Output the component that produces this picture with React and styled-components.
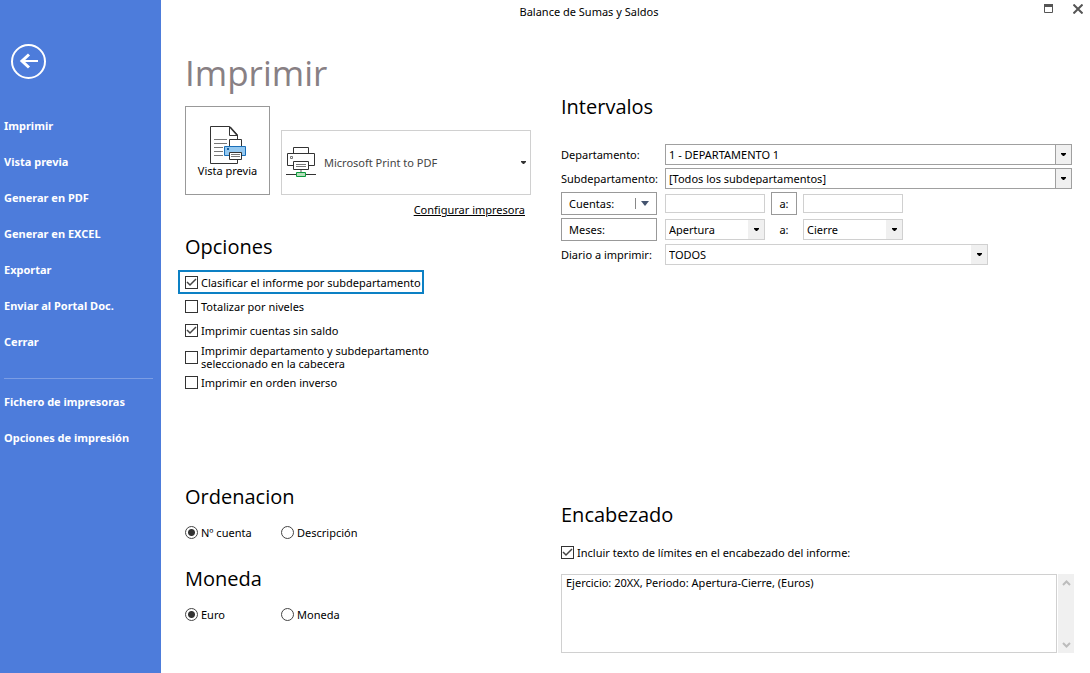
import React, { useState } from 'react';
import styled, { createGlobalStyle } from 'styled-components';

const menuItems = [
  'Imprimir',
  'Vista previa',
  'Generar en PDF',
  'Generar en EXCEL',
  'Exportar',
  'Enviar al Portal Doc.',
  'Cerrar',
];

const configItems = ['Fichero de impresoras', 'Opciones de impresión'];

const printOptions = [
  { id: 'clasificar', label: 'Clasificar el informe por subdepartamento', checked: true, active: true },
  { id: 'totalizar', label: 'Totalizar por niveles', checked: false },
  { id: 'sinsaldo', label: 'Imprimir cuentas sin saldo', checked: true },
  {
    id: 'cabecera',
    label: 'Imprimir departamento y subdepartamento seleccionado en la cabecera',
    checked: false,
  },
  { id: 'inverso', label: 'Imprimir en orden inverso', checked: false },
];

function BackIcon() {
  return (
    <svg width="35" height="35" viewBox="0 0 35 35" fill="none" stroke="#fff">
      <circle cx="17.5" cy="17.5" r="16.5" strokeWidth="2" />
      <path d="M27 17H10.5" strokeWidth="2" />
      <path d="M18 10.5L11 17L18 23.5" strokeWidth="3" />
    </svg>
  );
}

function PreviewIcon() {
  return (
    <svg width="36" height="38" viewBox="1 0 36 38" fill="none">
      <path d="M1.5 0.5H20.5L28.5 9V37.5H1.5Z" fill="#fff" stroke="#333" />
      <path d="M20.5 0.5V9.5H28.5" stroke="#333" />
      <path d="M21 1L28 9" stroke="#333" strokeWidth="1.6" />
      <path d="M5 13.5H18M5 17.5H18M5 21.5H14M5 25.5H14M5 29.5H14" stroke="#777" />
      <path d="M20.5 20.5V13.5H32.5V20.5" fill="#fff" stroke="#333" />
      <path d="M15.5 20.5H36.5V29.5H15.5Z" fill="#94c8f0" stroke="#1a6fb8" />
      <path d="M18 22H20V24H18Z" fill="#1a5f9e" />
      <path d="M20.5 26.5H32.5V33.5H20.5Z" fill="#fff" stroke="#333" />
      <path d="M22 28.5H31M22 30.5H31" stroke="#777" />
    </svg>
  );
}

function PrinterIcon() {
  return (
    <svg width="30" height="31" viewBox="0 0 30 31" fill="none">
      <path d="M7.5 6.5V0.5H22.5V6.5" fill="#fff" stroke="#333" />
      <path d="M1.5 6.5H28.5V18.5H1.5Z" fill="#fff" stroke="#333" />
      <path d="M4.5 9.5H6.5V11.5H4.5Z" stroke="#777" />
      <path d="M7.5 14.5H22.5V22.5H7.5Z" fill="#fff" stroke="#333" />
      <path d="M10 17.5H20M10 19.5H20" stroke="#777" />
      <path d="M15 23V26" stroke="#aaa" strokeWidth="2" />
      <path d="M0 27.5H30" stroke="#333" />
      <path d="M10.5 25.5H19.5V29.5H10.5Z" fill="#b5dfba" stroke="#0c9a3c" />
    </svg>
  );
}

function Caret({ color = '#000' }) {
  return (
    <svg width="5" height="3" viewBox="0 0 5 3">
      <path d="M0 0H5V1L3 3H2L0 1Z" fill={color} />
    </svg>
  );
}

function Chevron({ down }) {
  return (
    <svg width="9" height="8" viewBox="0 0 9 8" fill="none" stroke="#bcbcbc" strokeWidth="2">
      <path d={down ? 'M1 2L4.5 5.5L8 2' : 'M1 6L4.5 2.5L8 6'} />
    </svg>
  );
}

function Check({ label, checked, onChange }) {
  return (
    <CheckLabel>
      <BoxHolder>
        <Box type="checkbox" checked={checked} onChange={onChange} />
        {checked && (
          <svg width="13" height="13" viewBox="0 0 13 13" fill="none" stroke="#444" strokeWidth="1.5">
            <path d="M2 6L5 9L11 3" />
          </svg>
        )}
      </BoxHolder>
      <span>{label}</span>
    </CheckLabel>
  );
}

function Radios({ name, items }) {
  const [value, setValue] = useState(items[0]);
  return (
    <RadioRow>
      {items.map((item) => (
        <CheckLabel key={item}>
          <Radio
            type="radio"
            name={name}
            checked={value === item}
            onChange={() => setValue(item)}
          />
          <span>{item}</span>
        </CheckLabel>
      ))}
    </RadioRow>
  );
}

function Combo({ id, label, value, width, strong }) {
  return (
    <ComboBox $width={width} $strong={strong}>
      <select id={id} aria-label={label} defaultValue={value}>
        <option>{value}</option>
      </select>
      <ComboArrow $strong={strong}>
        <Caret />
      </ComboArrow>
    </ComboBox>
  );
}

function App() {
  const [options, setOptions] = useState(printOptions);
  const [header, setHeader] = useState(true);

  const toggle = (id) =>
    setOptions(options.map((o) => (o.id === id ? { ...o, checked: !o.checked } : o)));

  return (
    <Page>
      <GlobalStyle />
      <Sidebar>
        <BackButton aria-label="Volver">
          <BackIcon />
        </BackButton>
        <Menu>
          {menuItems.map((item) => (
            <MenuLink href="#" key={item}>
              {item}
            </MenuLink>
          ))}
        </Menu>
        <Divider />
        <Menu>
          {configItems.map((item) => (
            <MenuLink href="#" key={item}>
              {item}
            </MenuLink>
          ))}
        </Menu>
      </Sidebar>

      <Main>
        <TitleBar>
          <WindowTitle>Balance de Sumas y Saldos</WindowTitle>
          <WindowButtons>
            <button aria-label="Maximizar">
              <svg width="9" height="9" viewBox="0 0 9 9">
                <path d="M0.5 0.5H8.5V8.5H0.5Z" fill="#fff" stroke="#555" />
                <path d="M0 0H9V3H0Z" fill="#555" />
              </svg>
            </button>
            <button aria-label="Cerrar">
              <svg width="10" height="10" viewBox="0 0 10 10" stroke="#555" strokeWidth="2">
                <path d="M0.5 0.5L9.5 9.5M9.5 0.5L0.5 9.5" />
              </svg>
            </button>
          </WindowButtons>
        </TitleBar>

        <Columns>
          <Left>
            <PageTitle>Imprimir</PageTitle>
            <PrinterRow>
              <PreviewButton>
                <PreviewIcon />
                Vista previa
              </PreviewButton>
              <PrinterButton>
                <PrinterIcon />
                <span>Microsoft Print to PDF</span>
                <Caret color="#333" />
              </PrinterButton>
            </PrinterRow>
            <ConfigLink href="#">Configurar impresora</ConfigLink>

            <Heading>Opciones</Heading>
            <OptionList>
              {options.map((o) => (
                <Option key={o.id} $active={o.active}>
                  <Check label={o.label} checked={o.checked} onChange={() => toggle(o.id)} />
                </Option>
              ))}
            </OptionList>

            <Heading>Ordenacion</Heading>
            <Radios name="orden" items={['Nº cuenta', 'Descripción']} />
            <Heading>Moneda</Heading>
            <Radios name="moneda" items={['Euro', 'Moneda']} />
          </Left>

          <Right>
            <Heading>Intervalos</Heading>
            <Fields>
              <Field>
                <label htmlFor="departamento">Departamento:</label>
                <Combo id="departamento" value="1 - DEPARTAMENTO 1" strong />
              </Field>
              <Field>
                <label htmlFor="subdepartamento">Subdepartamento:</label>
                <Combo id="subdepartamento" value="[Todos los subdepartamentos]" strong />
              </Field>
              <Field>
                <FieldButton>
                  Cuentas:
                  <SplitArrow>
                    <svg width="8" height="5" viewBox="0 0 8 5">
                      <path d="M0 0H8L4 5Z" fill="#44546f" />
                    </svg>
                  </SplitArrow>
                </FieldButton>
                <Range>
                  <TextInput aria-label="Cuenta inicial" />
                  <ToButton>a:</ToButton>
                  <TextInput aria-label="Cuenta final" />
                </Range>
              </Field>
              <Field>
                <FieldButton>Meses:</FieldButton>
                <Range>
                  <Combo label="Mes inicial" value="Apertura" width="100px" />
                  <ToLabel>a:</ToLabel>
                  <Combo label="Mes final" value="Cierre" width="100px" />
                </Range>
              </Field>
              <Field>
                <label htmlFor="diario">Diario a imprimir:</label>
                <Combo id="diario" value="TODOS" width="323px" />
              </Field>
            </Fields>

            <Heading>Encabezado</Heading>
            <HeaderOption>
              <Check
                label="Incluir texto de límites en el encabezado del informe:"
                checked={header}
                onChange={() => setHeader(!header)}
              />
            </HeaderOption>
            <HeaderText>
              <textarea
                aria-label="Texto del encabezado"
                defaultValue="Ejercicio: 20XX, Periodo: Apertura-Cierre, (Euros)"
              />
              <ScrollBar>
                <button aria-label="Subir">
                  <Chevron />
                </button>
                <button aria-label="Bajar">
                  <Chevron down />
                </button>
              </ScrollBar>
            </HeaderText>
          </Right>
        </Columns>
      </Main>
    </Page>
  );
}

export default App;

const GlobalStyle = createGlobalStyle`
  * {
    box-sizing: border-box;
  }

  body {
    margin: 0;
    background: #fff;
    color: #000;
    font-family: 'Noto Sans', 'Open Sans', sans-serif;
    font-size: 11px;
    line-height: 13px;
  }

  button, input, select, textarea {
    margin: 0;
    padding: 0;
    border: none;
    border-radius: 0;
    background: transparent;
    color: inherit;
    font: inherit;
  }

  svg {
    display: block;
    flex-shrink: 0;
  }
`;

const Page = styled.div`
  display: flex;
  min-height: 100vh;
`;

const Sidebar = styled.aside`
  width: 161px;
  flex-shrink: 0;
  padding: 44px 8px 0 4px;
  background: #4d7cdb;
`;

const BackButton = styled.button`
  display: block;
  margin: 0 0 29px 7px;
`;

const Menu = styled.nav`
  display: flex;
  flex-direction: column;
`;

const MenuLink = styled.a`
  color: #fff;
  font-weight: 700;
  line-height: 36px;
  text-decoration: none;
  white-space: nowrap;
`;

const Divider = styled.hr`
  height: 1px;
  margin: 18px 0 5px;
  border: none;
  background: #7b9de4;
`;

const Main = styled.main`
  flex: 1;
  min-width: 0;
`;

const TitleBar = styled.header`
  display: flex;
  height: 24px;
`;

const WindowTitle = styled.div`
  flex: 1;
  text-align: center;
  line-height: 24px;
`;

const WindowButtons = styled.div`
  display: flex;
  gap: 20px;
  width: 73px;
  padding: 4px 0 0 27px;

  button {
    align-self: flex-start;
  }
`;

const Columns = styled.div`
  display: grid;
  grid-template-columns: 346px minmax(0, 1fr);
  column-gap: 30px;
  padding: 0 16px 20px 24px;
`;

const Left = styled.section`
  display: flex;
  flex-direction: column;
`;

const Right = styled.section`
  padding-top: 69px;
`;

const PageTitle = styled.h1`
  margin: 24px 0 8px;
  color: #888084;
  font-family: 'Open Sans', 'Noto Sans', sans-serif;
  font-size: 35px;
  font-weight: 400;
  line-height: 50px;
`;

const Heading = styled.h2`
  margin: 0;
  font-family: 'Open Sans', 'Noto Sans', sans-serif;
  font-size: 20px;
  font-weight: 400;
  line-height: 28px;
`;

const PrinterRow = styled.div`
  display: flex;
  align-items: flex-end;
  gap: 11px;
`;

const PreviewButton = styled.button`
  display: flex;
  flex-direction: column;
  align-items: center;
  width: 85px;
  height: 89px;
  padding-top: 19px;
  border: 1px solid #999;
`;

const PrinterButton = styled.button`
  display: flex;
  flex: 1;
  align-items: center;
  height: 65px;
  padding: 0 4px;
  border: 1px solid #d0d0d0;
  color: #444;

  span {
    flex: 1;
    padding-left: 8px;
    text-align: left;
  }
`;

const ConfigLink = styled.a`
  align-self: flex-end;
  margin: 7px 6px 15px 0;
  color: #000;
  line-height: 16px;
`;

const OptionList = styled.div`
  display: flex;
  flex-direction: column;
  align-items: flex-start;
  margin: 9px 0 91px -7px;
`;

const Option = styled.div`
  display: flex;
  align-items: center;
  min-height: 24px;
  max-width: 256px;
  padding: 0 1px 0 5px;
  border: 2px solid ${(props) => (props.$active ? '#0c80c4' : 'transparent')};

  &:last-child {
    min-height: 20px;
  }
`;

const CheckLabel = styled.label`
  display: flex;
  align-items: center;
  gap: 3px;
`;

const BoxHolder = styled.span`
  display: grid;
  flex-shrink: 0;

  > * {
    grid-area: 1 / 1;
  }

  svg {
    pointer-events: none;
  }
`;

const Box = styled.input`
  width: 13px;
  height: 13px;
  border: 1px solid #333;
  background: #fff;
  appearance: none;
`;

const RadioRow = styled.div`
  display: grid;
  grid-template-columns: 96px 1fr;
  margin: 15px 0 26px;
`;

const Radio = styled.input`
  width: 13px;
  height: 13px;
  border: 1px solid #444;
  border-radius: 50%;
  appearance: none;

  &:checked {
    background: radial-gradient(circle, #333 3px, transparent 4px);
  }
`;

const Fields = styled.div`
  display: flex;
  flex-direction: column;
  gap: 3px;
  margin: 23px 2px 236px 0;
`;

const Field = styled.div`
  display: grid;
  grid-template-columns: 96px minmax(0, 1fr);
  align-items: center;
  column-gap: 8px;
  white-space: nowrap;
`;

const ComboBox = styled.div`
  display: grid;
  grid-template-columns: 1fr 16px;
  width: ${(props) => props.$width || '100%'};
  height: 21px;
  border: 1px solid ${(props) => (props.$strong ? '#a0a0a0' : '#d0d0d0')};

  select {
    grid-area: 1 / 1 / 2 / 3;
    min-width: 0;
    padding-left: 3px;
    appearance: none;
  }
`;

const ComboArrow = styled.span`
  display: flex;
  grid-area: 1 / 2;
  align-items: center;
  justify-content: center;
  border-left: ${(props) => (props.$strong ? '1px solid #a0a0a0' : 'none')};
  background: #f0f0f0;
  pointer-events: none;
`;

const FieldButton = styled.button`
  display: flex;
  align-items: center;
  justify-content: space-between;
  height: 23px;
  padding: 0 7px;
  border: 1px solid #999;
`;

const SplitArrow = styled.span`
  display: flex;
  align-items: center;
  height: 11px;
  padding-left: 5px;
  border-left: 1px solid #888;
`;

const Range = styled.div`
  display: flex;
  align-items: center;
  gap: 6px;
`;

const TextInput = styled.input`
  width: 100px;
  height: 19px;
  padding: 0 3px;
  border: 1px solid #d0d0d0;
`;

const ToButton = styled.button`
  width: 26px;
  height: 23px;
  border: 1px solid #999;
`;

const ToLabel = styled.span`
  width: 26px;
  text-align: center;
`;

const HeaderOption = styled.div`
  margin: 17px 0 15px;
`;

const HeaderText = styled.div`
  display: flex;
  gap: 1px;
  height: 79px;

  textarea {
    flex: 1;
    padding: 1px 4px;
    border: 1px solid #d0d0d0;
    outline: none;
    resize: none;
  }
`;

const ScrollBar = styled.div`
  display: flex;
  flex-direction: column;
  align-items: center;
  justify-content: space-between;
  width: 16px;
  padding: 5px 0 4px;
  background: #f0f0f0;
`;
